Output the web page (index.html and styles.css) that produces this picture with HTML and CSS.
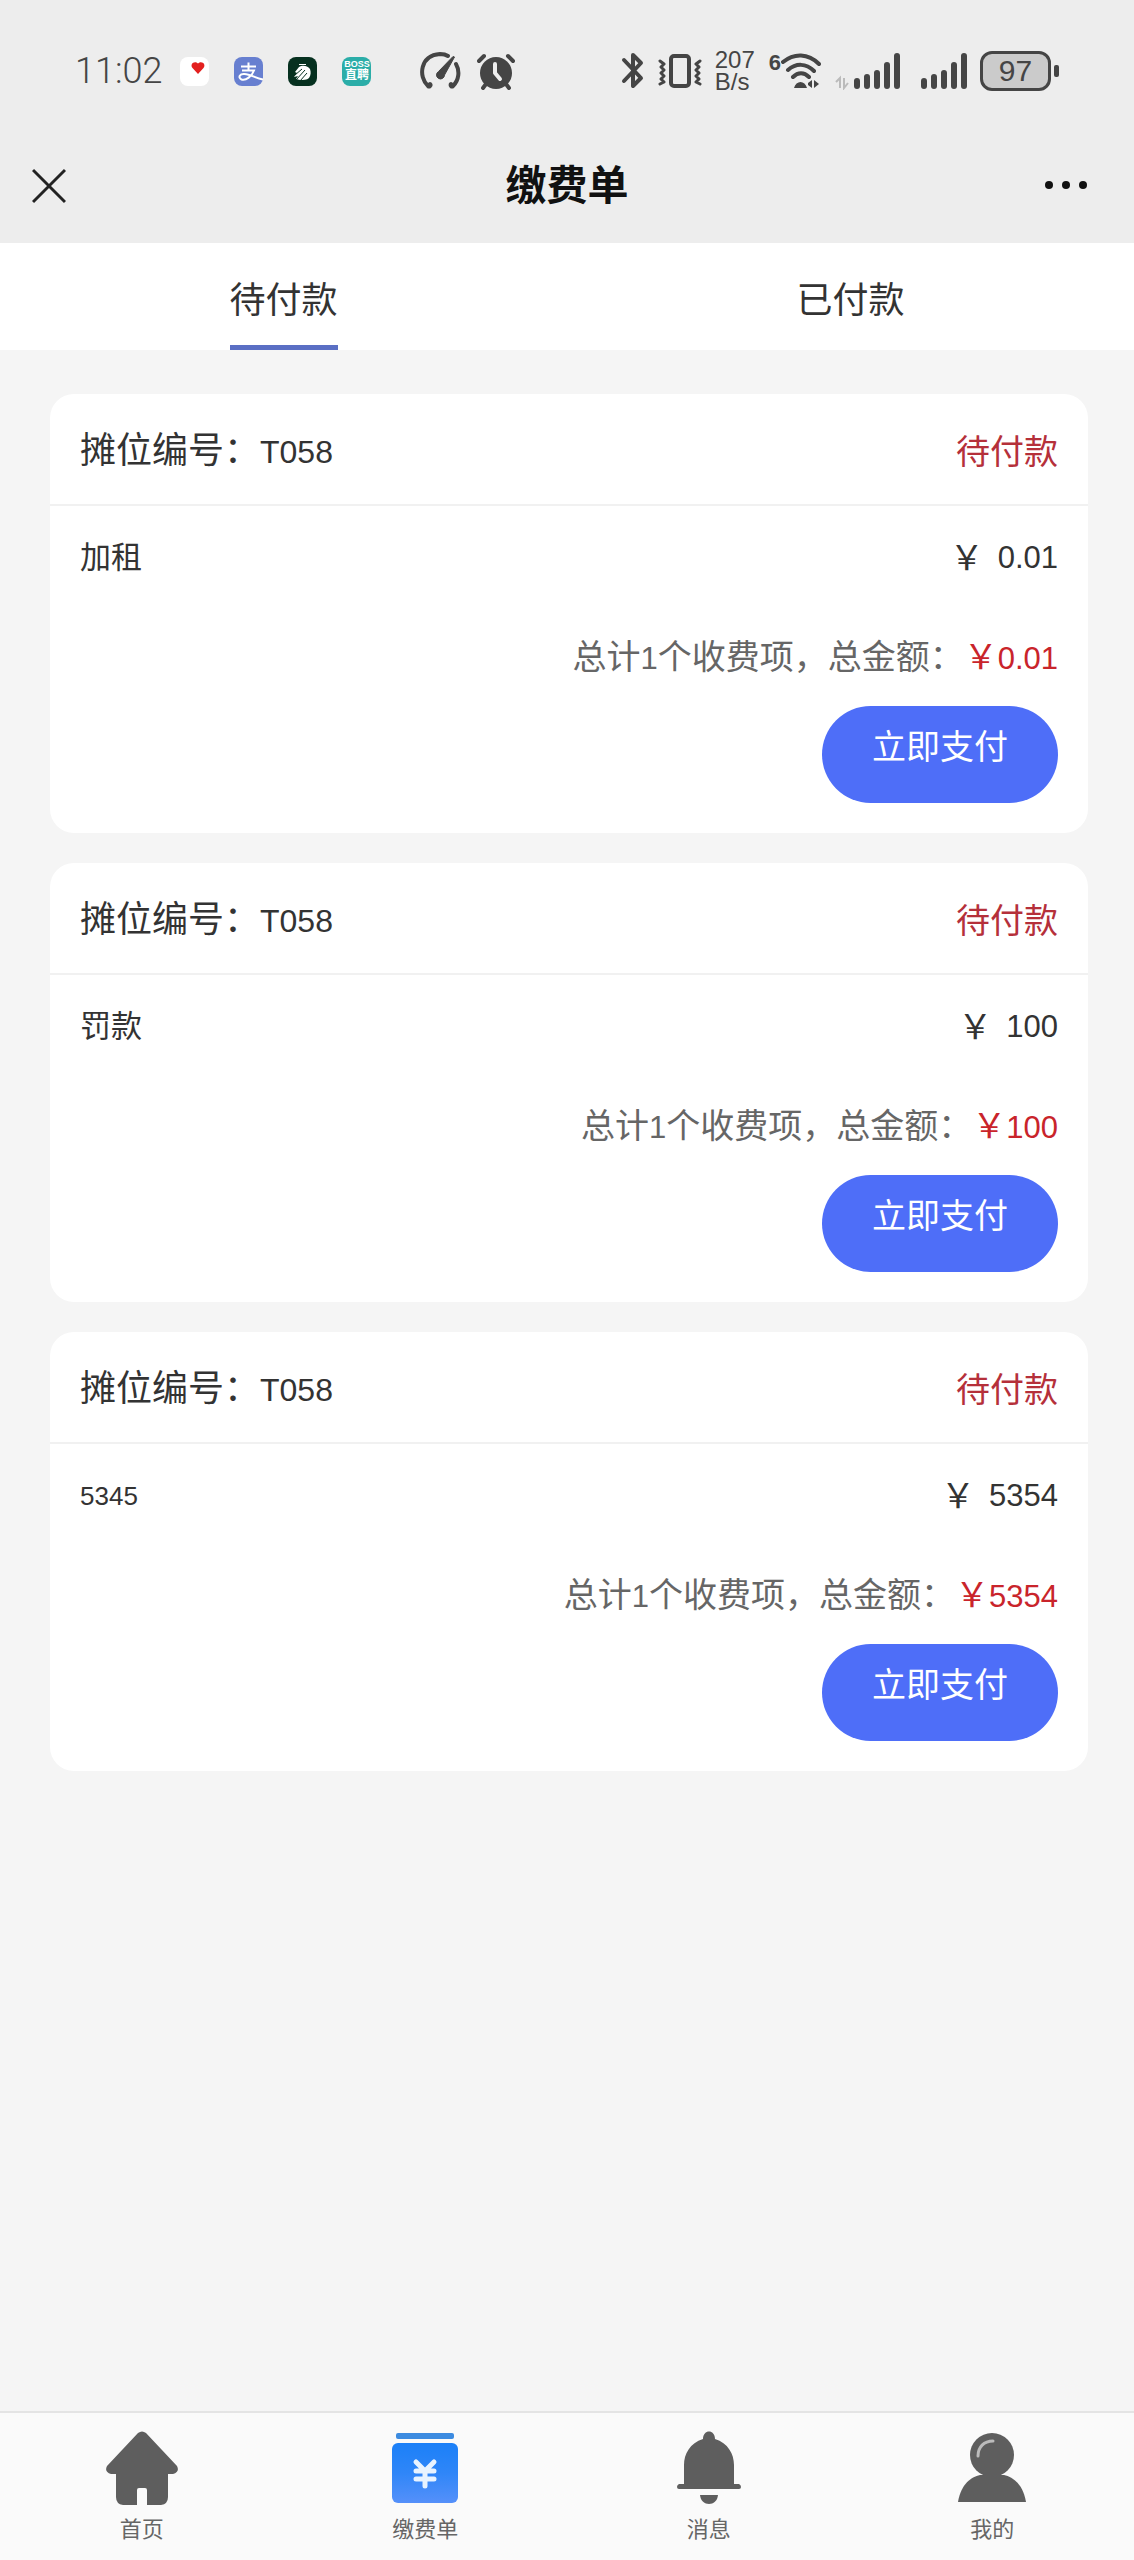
FILE: index.html
```html
<!DOCTYPE html>
<html lang="zh-CN">
<head>
    <meta charset="UTF-8">
    <meta name="viewport" content="width=device-width, initial-scale=1.0">
    <title>缴费单</title>
    <link rel="stylesheet" href="styles.css">
</head>
<body>
    <header class="top">
        <!-- 状态栏 -->
        <div class="status-bar">
            <span class="time">11:02</span>
            <div class="apps">
                <svg width="29" height="29" viewBox="0 0 29 29">
                    <rect width="29" height="29" rx="8" fill="#fff"/>
                    <path d="M18 17 L12.500 11 C9.500 7 14.500 3 18 6.500 C21.500 3 26.500 7 23.500 11 Z" fill="#e3201f"/>
                </svg>
                <svg width="29" height="29" viewBox="0 0 29 29">
                    <rect width="29" height="29" rx="8" fill="#677fd0"/>
                    <path d="M7 9.500H22M14.500 5.500V13.500M8 13.500H20C18 19 12 24 7.500 22.500C3.500 20.500 6 16.500 10.500 17C16 17.500 21 20.500 29 22.500" fill="none" stroke="#fff" stroke-width="2"/>
                </svg>
                <svg width="29" height="29" viewBox="0 0 29 29">
                    <rect width="29" height="29" rx="8" fill="#06301f"/>
                    <path d="M7 15L11 10C14 8 19 8 22 12C23 15 23 18 21 21C19 23 15 23 12 23L8 22L10 19L6 20L9 16Z" fill="#fff"/>
                    <path d="M7 18L14 12M8 23L17 13M12 24L19 16" fill="none" stroke="#06301f" stroke-width="1"/>
                    <path d="M11 7.500H18" stroke="#fff" stroke-width="1"/>
                </svg>
                <span class="app-boss"><b>BOSS</b><b>直聘</b></span>
            </div>
            <svg class="gauge" width="42" height="38" viewBox="0 0 42 38">
                <path d="M10 32A1 1 0 0 1 8 34C-2 25 0 3 20 2C23 2 25 2 28 4M36 12C40 19 39 28 33 34A1 1 0 0 1 31 32" fill="none" stroke="#454545" stroke-width="4" stroke-linecap="round" stroke-linejoin="round"/>
                <path d="M34.500 5L24.500 23A4 4 0 1 1 18.500 19.500L33 4.500Z" fill="#454545" stroke="#454545" stroke-width="1"/>
            </svg>
            <svg width="38" height="37" viewBox="0 0 38 37">
                <circle cx="19" cy="20" r="16" fill="#454545"/>
                <path d="M2 8L7 3M36 8L31 3M9 31L6 35M29 31L32 35" stroke="#454545" stroke-width="4" stroke-linecap="round"/>
                <path d="M18 11V20L23 26" fill="none" stroke="#eee" stroke-width="4" stroke-linecap="round" stroke-linejoin="round"/>
            </svg>
            <div class="status-right">
                <svg width="24" height="38" viewBox="0 0 24 38">
                    <path d="M3 8L20 26L12 34V3L20 11L3 29" fill="none" stroke="#454545" stroke-width="4" stroke-linecap="round" stroke-linejoin="round"/>
                </svg>
                <svg width="44" height="38" viewBox="0 0 44 38">
                    <rect x="13" y="4" width="18" height="30" rx="3" fill="none" stroke="#454545" stroke-width="4"/>
                    <path d="M2 9L6 12L3 15L6 18L3 21L6 24L3 27L6 30L2 32M42 9L38 12L41 15L38 18L41 21L38 24L41 27L38 30L42 32" fill="none" stroke="#454545" stroke-width="3" stroke-linejoin="round" stroke-linecap="round"/>
                </svg>
                <div class="net"><span>207</span><span>B/s</span></div>
                <div class="wifi">
                    <span>6</span>
                    <svg width="40" height="38" viewBox="12 0 40 38">
                        <path d="M14 10C25 1 39 1 50 12M19 18C27 11 37 11 45 19M24 25C29 20 35 20 40 25" fill="none" stroke="#454545" stroke-width="4" stroke-linecap="round"/>
                        <path d="M25 36C27 28 36 28 38 36ZM39 31L43 28V36L39 33ZM45 28L50 32L45 36Z" fill="#454545"/>
                    </svg>
                </div>
                <svg width="66" height="38" viewBox="0 0 66 38">
                    <path d="M2 30L6 26V36M10 26V36L14 31" fill="none" stroke="#bbb" stroke-width="2"/>
                    <path d="M23 29V34M33 25V34M43 21V34M53 13V34M63 4V34" stroke="#454545" stroke-width="6" stroke-linecap="round"/>
                </svg>
                <svg class="signal" width="46" height="38" viewBox="0 0 46 38">
                    <path d="M3 29V34M13 25V34M23 21V34M33 13V34M43 4V34" stroke="#454545" stroke-width="6" stroke-linecap="round"/>
                </svg>
                <div class="battery"><span>97</span></div>
            </div>
        </div>

        <!-- 标题栏 -->
        <div class="nav-bar">
            <button class="icon-btn" aria-label="关闭">
                <svg width="34" height="36" viewBox="0 0 34 36">
                    <path d="M1 2L33 34M33 2L1 34" stroke="#222" stroke-width="3"/>
                </svg>
            </button>
            <h1>缴费单</h1>
            <button class="icon-btn more" aria-label="更多">
                <svg width="60" height="12" viewBox="0 0 60 12">
                    <circle cx="7" cy="5" r="4"/>
                    <circle cx="24" cy="5" r="4"/>
                    <circle cx="41" cy="5" r="4"/>
                </svg>
            </button>
        </div>
    </header>

    <div class="tabs">
        <button class="tab active">待付款</button>
        <button class="tab">已付款</button>
    </div>

    <main class="list">
        <section class="card">
            <div class="card-header">
                <h2>摊位编号：<span class="code">T058</span></h2>
                <span class="state">待付款</span>
            </div>
            <div class="card-item">
                <span>加租</span>
                <span class="price">￥<span class="num">0.01</span></span>
            </div>
            <div class="card-total">总计<span class="num">1</span>个收费项，总金额：<span class="total">￥<span class="num">0.01</span></span></div>
            <button class="pay-btn">立即支付</button>
        </section>

        <section class="card">
            <div class="card-header">
                <h2>摊位编号：<span class="code">T058</span></h2>
                <span class="state">待付款</span>
            </div>
            <div class="card-item">
                <span>罚款</span>
                <span class="price">￥<span class="num">100</span></span>
            </div>
            <div class="card-total">总计<span class="num">1</span>个收费项，总金额：<span class="total">￥<span class="num">100</span></span></div>
            <button class="pay-btn">立即支付</button>
        </section>

        <section class="card">
            <div class="card-header">
                <h2>摊位编号：<span class="code">T058</span></h2>
                <span class="state">待付款</span>
            </div>
            <div class="card-item">
                <span class="item-num">5345</span>
                <span class="price">￥<span class="num">5354</span></span>
            </div>
            <div class="card-total">总计<span class="num">1</span>个收费项，总金额：<span class="total">￥<span class="num">5354</span></span></div>
            <button class="pay-btn">立即支付</button>
        </section>
    </main>

    <!-- 底部导航 -->
    <nav class="tab-bar">
        <a href="#home">
            <svg width="74" height="74" viewBox="0 0 74 74">
                <path d="M33 2Q37 -1 41 2L72 35Q75 41 68 43H63V66Q63 73 56 74H42V59Q42 57 40 57H34Q32 57 32 59V74H18Q11 73 11 66V43H6Q-1 41 2 35Z" fill="#5e5e5e"/>
            </svg>
            <span>首页</span>
        </a>
        <a href="#bill">
            <svg width="74" height="74" viewBox="0 0 74 74">
                <defs>
                    <linearGradient id="bill" x1="0" y1="0" x2="0" y2="1">
                        <stop offset="0" stop-color="#1b80f8"/>
                        <stop offset="0.5" stop-color="#2f86f8"/>
                        <stop offset="1" stop-color="#5590fa"/>
                    </linearGradient>
                </defs>
                <rect x="8" y="2" width="58" height="6" rx="2" fill="#3c8be0"/>
                <rect x="4" y="12" width="66" height="60" rx="6" fill="url(#bill)"/>
                <path d="M28 31L37 40L46 31M28 40H46M28 48H46M37 41V55" fill="none" stroke="#e8f3ff" stroke-width="5" stroke-linecap="round"/>
            </svg>
            <span>缴费单</span>
        </a>
        <a href="#message">
            <svg width="74" height="74" viewBox="0 0 74 74">
                <path d="M31 8C31 -2 43 -2 43 8C56 12 62 23 62 34V53H67Q69 54 69 56Q69 58 67 58H7Q5 58 5 56Q5 54 7 53H12V34C12 23 18 12 31 8Z" fill="#5e5e5e"/>
                <path d="M28 64H46C45 76 29 76 28 64Z" fill="#5e5e5e"/>
            </svg>
            <span>消息</span>
        </a>
        <a href="#mine">
            <svg width="74" height="74" viewBox="0 0 74 74">
                <circle cx="37" cy="24" r="22" fill="#5e5e5e"/>
                <path d="M3 71C6 53 16 46 25 44H49C58 46 68 53 71 71Z" fill="#5e5e5e"/>
                <path d="M23 25C23 16 29 10 38 10" fill="none" stroke="#bbb" stroke-width="3" stroke-linecap="round"/>
            </svg>
            <span>我的</span>
        </a>
    </nav>
</body>
</html>
```
FILE: styles.css
```css
* {
    box-sizing: border-box;
}
body {
    font-family: "Liberation Sans", "Noto Sans CJK SC", sans-serif;
    margin: 0;
    min-height: 100vh;
    display: flex;
    flex-direction: column;
    background-color: #f5f5f5;
    color: #333;
}
button {
    font-family: inherit;
    border: none;
    background: none;
    padding: 0;
    cursor: pointer;
}
svg {
    display: block;
    flex-shrink: 0;
}
.top {
    background-color: #ededed;
}
/* 状态栏 */
.status-bar {
    display: flex;
    align-items: center;
    height: 128px;
    padding: 14px 75px 0;
    color: #454545;
}
.time {
    font-family: Roboto, "Liberation Sans", sans-serif;
    font-size: 36px;
    font-weight: 300;
    line-height: 48px;
}
.apps {
    display: flex;
    gap: 25px;
    margin-left: 18px;
}
.app-boss {
    display: flex;
    flex-direction: column;
    align-items: center;
    justify-content: center;
    width: 29px;
    height: 29px;
    border-radius: 8px;
    background: #2bada8;
    color: #fff;
    font-size: 9px;
    line-height: 9px;
}
.app-boss b + b {
    font-size: 12px;
    line-height: 13px;
}
.gauge {
    margin-left: 49px;
    margin-right: 15px;
}
.status-right {
    display: flex;
    align-items: center;
    gap: 13px;
    margin-left: auto;
}
.net {
    display: flex;
    flex-direction: column;
    width: 41px;
    font-size: 24px;
    line-height: 22px;
}
.wifi {
    display: flex;
    font-size: 22px;
    font-weight: bold;
    line-height: 22px;
}
.signal {
    margin-left: 8px;
}
.battery {
    display: flex;
    align-items: center;
}
.battery span {
    width: 71px;
    border: 3px solid #454545;
    border-radius: 12px;
    background: #cbcbcb;
    font-size: 30px;
    line-height: 34px;
    text-align: center;
}
.battery::after {
    content: "";
    width: 5px;
    height: 12px;
    margin-left: 3px;
    border-radius: 2px;
    background: #454545;
}
/* 标题栏 */
.nav-bar {
    display: flex;
    align-items: center;
    justify-content: space-between;
    height: 115px;
    padding: 0 32px;
}
.nav-bar h1 {
    margin: 0;
    font-size: 41px;
    line-height: 60px;
    color: #111;
}
.icon-btn {
    display: flex;
    flex: 1;
    fill: #111;
}
.more {
    justify-content: flex-end;
}
/* 切换标签 */
.tabs {
    display: flex;
    background-color: #fff;
}
.tab {
    flex: 1;
    display: flex;
    flex-direction: column;
    align-items: center;
    padding-top: 31px;
    font-size: 36px;
    line-height: 54px;
    color: #333;
}
.tab::after {
    content: "";
    width: 108px;
    height: 5px;
    margin-top: 17px;
}
.tab.active::after {
    background-color: #5a6fc4;
}
/* 缴费卡片 */
.list {
    display: flex;
    flex-direction: column;
    gap: 30px;
    padding: 44px 46px 30px 50px;
}
.card {
    display: flex;
    flex-direction: column;
    padding-bottom: 30px;
    border-radius: 24px;
    background-color: #fff;
}
.card-header {
    display: flex;
    align-items: center;
    justify-content: space-between;
    padding: 30px 30px 25px;
    border-bottom: 2px solid #f1f1f1;
}
.card-header h2 {
    margin: 0;
    font-size: 36px;
    font-weight: normal;
    line-height: 54px;
}
.code {
    font-size: 32px;
}
.state {
    font-size: 34px;
    line-height: 54px;
    color: #b5303a;
}
.card-item {
    display: flex;
    align-items: center;
    justify-content: space-between;
    padding: 27px 30px 24px;
    font-size: 31px;
    line-height: 50px;
}
.item-num {
    font-size: 26px;
}
.price {
    display: flex;
    gap: 14px;
    font-size: 34px;
}
.num {
    font-size: 31px;
}
.card-total {
    padding: 25px 30px 0;
    font-size: 34px;
    line-height: 50px;
    text-align: right;
    color: #666;
}
.total {
    color: #c9242b;
}
.pay-btn {
    align-self: flex-end;
    margin: 22px 30px 0 0;
    padding: 16px 50px 31px;
    border-radius: 49px;
    background-color: #4e6ef8;
    color: #fff;
    font-size: 34px;
    line-height: 50px;
}
/* 底部导航 */
.tab-bar {
    display: flex;
    margin-top: auto;
    padding: 18px 0 13px;
    border-top: 2px solid #e4e4e4;
    background-color: #fafafa;
}
.tab-bar a {
    flex: 1;
    display: flex;
    flex-direction: column;
    align-items: center;
    gap: 8px;
    color: #666;
    font-size: 22px;
    line-height: 34px;
    text-decoration: none;
}
```
